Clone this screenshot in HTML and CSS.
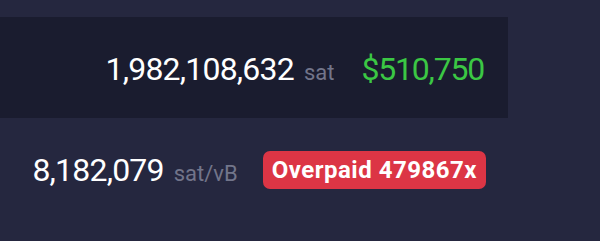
FILE: index.html
```html
<!DOCTYPE html>
<html>
<head>
<meta charset="utf-8">
<link rel="stylesheet" href="styles.css">
</head>
<body>
<div class="page">
  <div class="band">
    <div class="amount">
      <span class="num">1,982,108,632</span>
      <span class="unit">sat</span>
    </div>
    <span class="fiat">$510,750</span>
  </div>
  <div class="row2">
    <div class="amount">
      <span class="num">8,182,079</span>
      <span class="unit">sat/vB</span>
    </div>
    <span class="badge">Overpaid 479867x</span>
  </div>
</div>
</body>
</html>
```
FILE: styles.css
```css
html, body {
  margin: 0;
  padding: 0;
  background: #25273f;
  width: 600px;
  height: 241px;
  overflow: hidden;
  font-family: Roboto, "Liberation Sans", sans-serif;
}
.page {
  padding-top: 17px;
  width: 508px;
}
.band {
  background: #1a1c2f;
  height: 101px;
  display: flex;
  align-items: baseline;
  justify-content: flex-end;
  padding: 33px 24px 0 0;
  box-sizing: border-box;
}
.amount {
  display: flex;
  align-items: baseline;
}
.num {
  color: #ffffff;
  font-size: 32px;
  letter-spacing: -0.8px;
}
.unit {
  color: #72758a;
  font-size: 22px;
  margin-left: 10px;
}
.fiat {
  color: #3bc744;
  font-size: 32px;
  letter-spacing: -1.2px;
  margin-left: 27px;
}
.row2 {
  display: flex;
  align-items: center;
  justify-content: flex-end;
  height: 38px;
  padding-right: 22px;
  margin-top: 33px;
}
.badge {
  background: #dc3545;
  color: #fff;
  font-weight: bold;
  font-size: 24px;
  letter-spacing: 0.5px;
  line-height: 28px;
  border-radius: 7px;
  padding: 5px 9px;
  margin-left: 25px;
}
```
